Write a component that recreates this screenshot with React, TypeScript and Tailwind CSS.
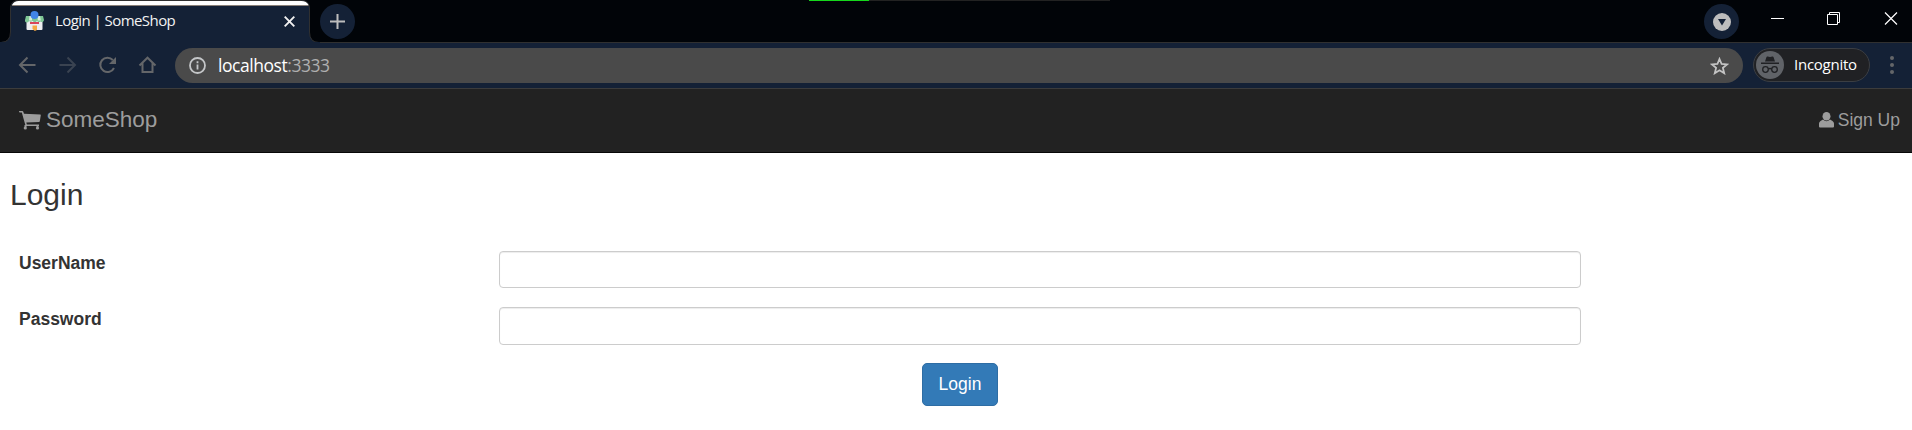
import React from 'react';

const ui = "font-['Open_Sans','Noto_Sans',sans-serif]";

function Favicon() {
  return (
    <svg width="20" height="20" viewBox="0 0 20 20" className="shrink-0">
      <rect x="1.5" y="8" width="16" height="11" rx="1" fill="#ececf0" />
      <path d="M1 5h17l1 4a2 2 0 0 1-3.5 1.4A2.5 2.5 0 0 1 12 9.800a2.500 2.500 0 0 1-4.500 0A2.500 2.500 0 0 1 4 9.800 2 2 0 0 1 0 9z" fill="#7fc796" />
      <path d="M4.500 5h2.500v4.500h-3zM12.500 5H15l.8 4.500h-3z" fill="#d9efdd" />
      <circle cx="9.500" cy="4" r="4" fill="#4285e8" />
      <rect x="5" y="11" width="9" height="2" fill="#d9455a" />
      <path d="M7.500 14.500h4.500v4.500l-2.200 1-2.300-2z" fill="#f5a742" />
    </svg>
  );
}

function TabStrip() {
  return (
    <div className="relative flex h-[43px] border-b border-[#303030] bg-[#010408]">
      <div className="absolute left-[809px] top-0 flex h-px w-[301px] bg-[#222]">
        <div className="h-px w-[60px] bg-[#16d81c]" />
      </div>
      <svg width="322" height="43" viewBox="0 0 322 43" className="absolute left-0 top-0">
        <path d="M0 43V42H1Q10.500 42 10.500 32V9Q10.500 1 18.500 1H301.500Q309.500 1 309.500 9V32Q309.500 42 319 42.500H322V43Z" fill="#142136" />
        <path d="M0 42.500H1Q10.500 42 10.500 32V9Q10.500 .5 18.500 .5H301.500Q309.500 .5 309.500 9V32Q309.500 42.500 319 42.500H322" fill="none" stroke="#303030" />
        <path d="M11 42.500H309" stroke="#142136" />
        <path d="M0 42.500H320" stroke="#142136" />
        <path d="M12 5Q14 1 18.500 1H301.500Q306.500 1 308.500 5Z" fill="#fff" />
        <path d="M12 5.500H308.500" stroke="#8a8078" />
      </svg>
      <div className={`relative flex h-[41px] w-[309px] items-center pl-[25px] text-[15px] text-[#f2f2f2] ${ui}`}>
        <Favicon />
        <span className="-mt-px ml-[10px] whitespace-nowrap tracking-[-0.56px]">Login | SomeShop</span>
        <svg width="11" height="11" viewBox="0 0 11 11" className="ml-auto mr-[14px] mt-[2px]" stroke="#f1f1f1" strokeWidth="1.900">
          <path d="M.7.7l9.600 9.600M10.300.7L.7 10.300" />
        </svg>
      </div>
      <div className="relative ml-[11px] mt-[4px] flex size-[35px] items-center justify-center rounded-full bg-[#142136]">
        <svg width="15" height="15" viewBox="0 0 15 15" stroke="#bdbdbd" strokeWidth="2"><path d="M7.500 0v15M0 7.500h15" /></svg>
      </div>
      <div className="ml-auto mr-[35px] mt-[4px] flex size-[35px] items-center justify-center rounded-full bg-[#142136]">
        <svg width="18" height="18" viewBox="0 0 18 18"><circle cx="9" cy="9" r="9" fill="#bdbdbd" /><path d="M5 6h8l-4 6.500z" fill="#142136" /></svg>
      </div>
      <svg width="138" height="42" viewBox="0 0 138 42" fill="none" stroke="#fff" className="shrink-0 overflow-visible">
        <path d="M-3 18.500H10M53.500 14.500h10v10h-10zM55.500 14v-1.500h10v10H64" />
        <path d="M111 12.500l12 12M123 12.500l-12 12" strokeWidth="1.200" />
      </svg>
    </div>
  );
}

function Toolbar() {
  return (
    <div className={`flex h-[46px] items-center border-b border-[#3c3c3c] bg-[#142136] ${ui}`}>
      <svg width="175" height="45" viewBox="0 0 175 45" fill="none" strokeWidth="2" className="shrink-0">
        <path d="M35.500 22H20.500M27.500 14.500L20 22l7.500 7.500" stroke="#646669" />
        <path d="M59.500 22h15M67.500 14.500L75 22l-7.500 7.500" stroke="#3a4351" />
        <path d="M114 25A7.200 7.200 0 1 1 112.800 17" stroke="#646669" />
        <path d="M116 14v7h-7z" fill="#646669" />
        <path d="M139.500 22.500l8-7.800 8 7.800M142.500 20v9h10v-9" stroke="#646669" />
      </svg>
      <div className="flex h-[35px] w-[1568px] items-center rounded-full bg-[#4a4a4a] pl-[14px] pr-[14px]">
        <svg width="17" height="17" viewBox="0 0 17 17" fill="none" stroke="#c4c6c8" strokeWidth="1.800">
          <circle cx="8.500" cy="8.500" r="7.500" /><path d="M8.500 7.500v5M8.500 4.200v2" />
        </svg>
        <span className="-mt-px ml-[12px] text-[17.500px] tracking-[-0.45px] text-white">localhost<span className="text-[#afafaf]">:3333</span></span>
        <svg width="19" height="18" viewBox="0 0 19 18" className="ml-auto" fill="none" stroke="#c4c4c4" strokeWidth="1.800">
          <path d="M9.500 2l2.100 5 5.400.4-4.100 3.500 1.300 5.300-4.700-2.900-4.700 2.900 1.300-5.300L2 7.400 7.400 7z" />
        </svg>
      </div>
      <div className="-mt-px ml-[10px] flex h-[34px] w-[117px] items-center rounded-full border border-[#3b3e43] bg-[#202124] pl-[2px] text-[15px] text-white">
        <svg width="28" height="28" viewBox="0 0 28 28" className="shrink-0">
          <circle cx="14" cy="14" r="14" fill="#606368" />
          <path d="M9 10.500l1.500-4.500q.3-.8 1.200-.5l2.300.5 2.300-.5q.9-.3 1.200.5l1.500 4.500zM5 11.500h18v1.500H5z" fill="#202124" />
          <g fill="none" stroke="#202124" strokeWidth="1.300"><circle cx="9.500" cy="18.500" r="2.800" /><circle cx="18.500" cy="18.500" r="2.800" /><path d="M12.300 18q1.700-1 3.400 0" /></g>
        </svg>
        <span className="-mt-px ml-[10px] tracking-[-0.25px]">Incognito</span>
      </div>
      <svg width="4" height="18" viewBox="0 0 4 18" fill="#646669" className="-mt-px ml-[20px]"><circle cx="2" cy="2" r="2" /><circle cx="2" cy="9" r="2" /><circle cx="2" cy="16" r="2" /></svg>
    </div>
  );
}

function Field({ label, type, box }: { label: string; type: string; box: string }) {
  return (
    <div className="flex h-[56px] items-start">
      <label className="w-[480px] shrink-0 text-[17.500px] font-bold leading-[25px] text-[#333]">{label}</label>
      <input type={type} className={`w-[1082px] rounded-[4px] border border-[#ccc] bg-white shadow-[inset_0_1px_1px_rgba(0,0,0,.075)] outline-none ${box}`} />
    </div>
  );
}

export default function App() {
  return (
    <div className="h-[430px] w-[1912px] overflow-hidden bg-white font-['Liberation_Sans',Arial,sans-serif]">
      <TabStrip />
      <Toolbar />
      <nav className="flex h-[64px] items-center justify-between border-b border-[#080808] bg-[#222] pl-[19px] pr-[12px] text-[#9d9d9d]">
        <div className="flex items-center text-[22.500px]">
          <svg width="22" height="19" viewBox="0 0 22 19" fill="#9d9d9d">
            <path d="M0 0H3.300Q4.100 0 4.400.9L5 2.700 21.300 3.500Q21.900 3.500 21.800 4.200L20.800 10.200Q20.700 10.900 20 11L7.300 11.500 7.900 13.400H20V15H7.200Q6.600 15 6.400 14.300L2.800 1.400H.7Q0 1.400 0 0z" />
            <circle cx="6.300" cy="17" r="1.600" /><circle cx="18.500" cy="17" r="1.600" /><path d="M5.500 14h2v2h-2zM17.500 14h2v2h-2z" />
          </svg>
          <span className="-mt-px ml-[5px]">SomeShop</span>
        </div>
        <div className="flex items-center text-[17.500px]">
          <svg width="15" height="16" viewBox="0 0 15 16" fill="#9d9d9d" className="-mt-px">
            <ellipse cx="7.500" cy="4.300" rx="4" ry="4.300" /><path d="M4 7.500Q7.500 11 11 7.500L13.500 9Q15 10 15 11.500V14.500Q15 15.500 14 15.500H1Q0 15.500 0 14.500V11.500Q0 10 1.500 9z" />
          </svg>
          <span className="ml-[4px]">Sign Up</span>
        </div>
      </nav>
      <main className="px-[10px]">
        <h3 className="pt-[25px] text-[30px] font-normal leading-[33px] text-[#333]">Login</h3>
        <form className="pl-[9px] pt-[40px]">
          <Field label="UserName" type="text" box="h-[37px]" />
          <Field label="Password" type="password" box="h-[38px]" />
          <button type="button" className="ml-[903px] block h-[43px] w-[76px] rounded-[5px] border border-[#2e6da4] bg-[#337ab7] text-[17.500px] text-white">Login</button>
        </form>
      </main>
    </div>
  );
}
